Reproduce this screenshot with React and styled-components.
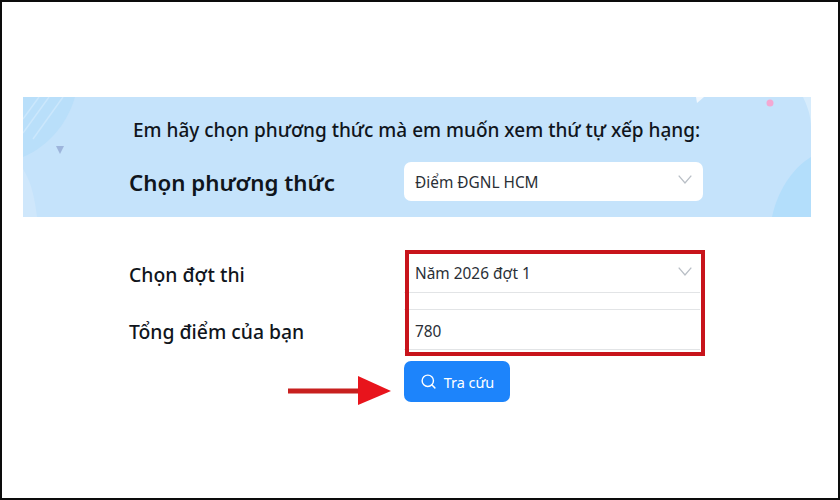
import styled, { createGlobalStyle } from "styled-components";
import { Search } from "lucide-react";

const GlobalStyle = createGlobalStyle`
  html, body {
    margin: 0;
    background: #fff;
  }
  * {
    box-sizing: border-box;
  }
`;

const App = () => {
  return (
    <>
      <GlobalStyle />
      <Frame>
        <Banner>
          <BannerArt viewBox="0 0 788 120" preserveAspectRatio="none">
            <path d="M0 0H52C44 28 24 50 0 60Z" fill="#b9dffa" />
            <path d="M0 36L26 0M0 22L16 0M10 42L40 0" stroke="#cbe7fc" strokeWidth="1.5" fill="none" />
            <path d="M0 120V72C9 86 12 104 14 120Z" fill="#cfe7fb" />
            <path d="M33 49L41 49L37 57Z" fill="#9db5dc" />
            <path d="M673 0H681L674 6Z" fill="#f2f8fe" />
            <circle cx="747" cy="6" r="3.5" fill="#f3a8d2" />
            <path d="M788 60C768 72 754 96 749 120H788Z" fill="#b3defb" />
            <path d="M780 0C786 12 788 22 788 30V0Z" fill="#d7ecfc" />
          </BannerArt>
          <Prompt>Em hãy chọn phương thức mà em muốn xem thứ tự xếp hạng:</Prompt>
          <FieldRow>
            <BigLabel>Chọn phương thức</BigLabel>
            <WhiteSelect>
              <span>Điểm ĐGNL HCM</span>
              <Chevron />
            </WhiteSelect>
          </FieldRow>
        </Banner>

        <Form>
          <FormRow>
            <BigLabel $small>Chọn đợt thi</BigLabel>
            <LineField>
              <span>Năm 2026 đợt 1</span>
              <Chevron />
            </LineField>
          </FormRow>
          <FormRow>
            <BigLabel $small>Tổng điểm của bạn</BigLabel>
            <LineField $boxed>
              <span>780</span>
            </LineField>
          </FormRow>
          <ButtonRow>
            <SearchButton>
              <Search size={17} strokeWidth={2} />
              Tra cứu
            </SearchButton>
          </ButtonRow>
          <RedBox />
          <RedArrow viewBox="0 0 104 30">
            <rect x="0" y="12.5" width="72" height="5" fill="#c8201f" />
            <path d="M70 0L103 15L70 29Z" fill="#e8141c" />
          </RedArrow>
        </Form>
      </Frame>
    </>
  );
};

const Chevron = () => (
  <ChevronIcon viewBox="0 0 14 9">
    <path d="M0.7 0.7L7 8L13.3 0.7" />
  </ChevronIcon>
);

const Frame = styled.div`
  width: 840px;
  height: 500px;
  padding: 95px 27px 0 21px;
  border: 2px solid #0c0c0c;
  background: #fff;
  font-family: "Noto Sans", "Open Sans", sans-serif;
  color: #10151c;
  overflow: hidden;
`;

const Banner = styled.section`
  position: relative;
  height: 120px;
  padding: 21px 0 0 106px;
  background: #c5e3fb;
`;

const BannerArt = styled.svg`
  position: absolute;
  inset: 0;
  width: 100%;
  height: 100%;
`;

const Prompt = styled.h2`
  position: relative;
  margin: 0 0 0 4px;
  font-size: 19px;
  line-height: 24px;
  font-weight: 500;
  white-space: nowrap;
`;

const FieldRow = styled.div`
  position: relative;
  display: flex;
  align-items: center;
  margin-top: 20px;
`;

const BigLabel = styled.label`
  width: 275px;
  flex: none;
  padding-top: ${(p) => (p.$small ? "3px" : "1px")};
  font-size: ${(p) => (p.$small ? "19.35px" : "22.3px")};
  font-weight: ${(p) => (p.$small ? 500 : 600)};
  white-space: nowrap;
`;

const WhiteSelect = styled.div`
  width: 299px;
  height: 39px;
  padding: 1px 11px 0;
  display: flex;
  align-items: center;
  justify-content: space-between;
  background: #fff;
  border-radius: 7px;
  font-size: 15.4px;
  color: #2a2f36;
`;

const ChevronIcon = styled.svg`
  width: 14px;
  height: 9px;
  margin-bottom: 5px;
  fill: none;
  stroke: #b9bfc6;
  stroke-width: 1.3;
`;

const Form = styled.div`
  position: relative;
  padding: 35px 0 0 106px;
`;

const FormRow = styled.div`
  display: flex;
  margin-bottom: 16px;
  height: 41px;
  align-items: center;
`;

const LineField = styled.div`
  width: 296px;
  height: 41px;
  padding: 3px 8px 0 11px;
  display: flex;
  align-items: center;
  justify-content: space-between;
  border-bottom: 1.5px solid #e2e4e6;
  border-top: ${(p) => (p.$boxed ? "1.5px solid #e2e4e6" : "none")};
  font-size: 15.4px;
  color: #2a2f36;
`;

const ButtonRow = styled.div`
  display: flex;
  padding-left: 275px;
  margin-top: -5px;
`;

const SearchButton = styled.button`
  width: 106px;
  height: 41px;
  display: flex;
  align-items: center;
  justify-content: center;
  gap: 7px;
  border: none;
  border-radius: 7px;
  background: #1d84fb;
  color: #fff;
  font-family: inherit;
  font-size: 14.5px;
`;

const RedBox = styled.div`
  position: absolute;
  left: 382px;
  top: 33px;
  width: 300px;
  height: 106px;
  border: 4px solid #c8141b;
`;

const RedArrow = styled.svg`
  position: absolute;
  left: 265px;
  top: 159px;
  width: 104px;
  height: 30px;
`;

export default App;
